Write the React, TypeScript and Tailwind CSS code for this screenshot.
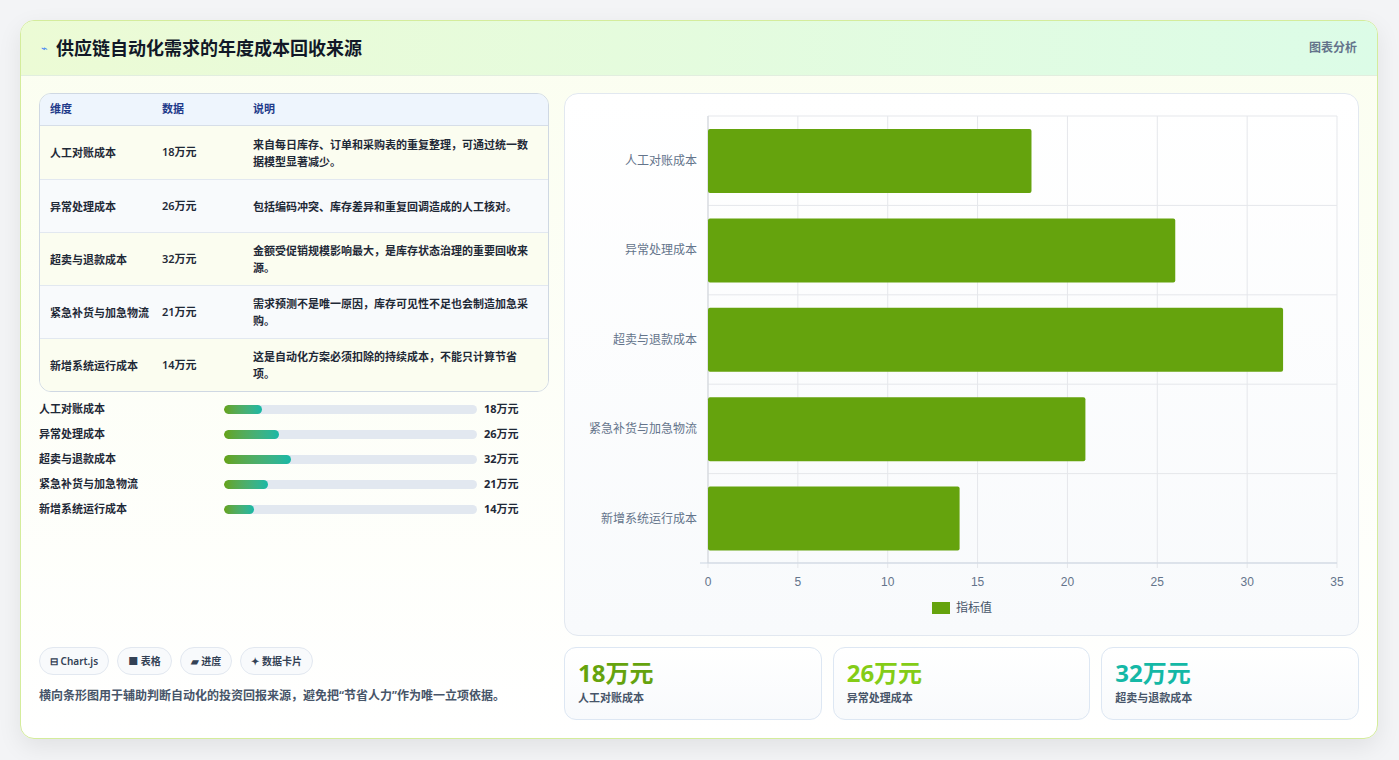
import React from "react";

const rows = [
  { k: "人工对账成本", v: 18, d: "来自每日库存、订单和采购表的重复整理，可通过统一数据模型显著减少。" },
  { k: "异常处理成本", v: 26, d: "包括编码冲突、库存差异和重复回调造成的人工核对。" },
  { k: "超卖与退款成本", v: 32, d: "金额受促销规模影响最大，是库存状态治理的重要回收来源。" },
  { k: "紧急补货与加急物流", v: 21, d: "需求预测不是唯一原因，库存可见性不足也会制造加急采购。" },
  { k: "新增系统运行成本", v: 14, d: "这是自动化方案必须扣除的持续成本，不能只计算节省项。" },
];

function Chart() {
  const x0 = 143, w = 629, top = 22, band = 89.4;
  const sx = (v: number) => x0 + (v / 35) * w;
  return (
    <svg width="795" height="543" className="block">
      {[0, 5, 10, 15, 20, 25, 30, 35].map((t) => (
        <g key={t}>
          <line x1={sx(t)} x2={sx(t)} y1={top} y2={top + 447 + 5} stroke="#e5e7eb" />
          <text x={sx(t)} y={492} fontSize="12" fill="#64748b" textAnchor="middle" fontFamily="Liberation Sans, sans-serif">{t}</text>
        </g>
      ))}
      {[0, 1, 2, 3, 4, 5].map((i) => (
        <line key={i} x1={x0} x2={x0 + w} y1={top + i * band} y2={top + i * band} stroke="#e5e7eb" />
      ))}
      <line x1={x0} x2={x0} y1={top} y2={top + 447} stroke="#d1d5db" />
      <line x1={x0 - 8} x2={x0 + w} y1={top + 447} y2={top + 447} stroke="#cbd5e1" />
      {rows.map((r, i) => (
        <g key={r.k}>
          <rect x={x0} y={top + i * band + 13} width={sx(r.v) - x0} height={64} rx="2" fill="#65a30d" />
          <text x={x0 - 11} y={top + i * band + 49} fontSize="12" fill="#64748b" textAnchor="end" fontFamily="Noto Sans CJK SC, sans-serif">{r.k}</text>
        </g>
      ))}
      <rect x={367} y={508} width={18} height={12} fill="#65a30d" />
      <text x={391} y={518} fontSize="12" fill="#475569" fontFamily="Noto Sans CJK SC, sans-serif">指标值</text>
    </svg>
  );
}

export default function App() {
  return (
    <div className="w-[1399px] h-[760px] bg-[#f3f4f6] pt-[20px] pl-[20px]" style={{ fontFamily: "'Noto Sans', 'Noto Sans CJK SC', sans-serif" }}>
      <div className="w-[1358px] h-[719px] rounded-[14px] border border-[#d4ec9c] bg-gradient-to-b from-[#fbfef0] to-white shadow-[0_8px_24px_rgba(0,0,0,0.08)] overflow-hidden flex flex-col">
        <div className="h-[55px] flex items-center justify-between px-[20px] bg-gradient-to-r from-[#ecfbd5] to-[#dcfce7] border-b border-[#e2eedf]">
          <div className="flex items-center gap-[8px]">
            <span className="text-[#3b82f6] text-[11px]">⌁</span>
            <span className="text-[18px] font-bold text-[#111827]">供应链自动化需求的年度成本回收来源</span>
          </div>
          <span className="text-[12px] font-semibold text-[#64748b]">图表分析</span>
        </div>
        <div className="flex gap-[15px] px-[18px] pt-[17px]">
          <div className="w-[510px] flex flex-col h-[630px]">
            <div className="rounded-[12px] border border-[#cfd8e3] overflow-hidden text-[11px]">
              <div className="flex h-[32px] items-center bg-[#eef5fd] text-[#1e3a8a] font-semibold border-b border-[#d6dee8]">
                <div className="w-[122px] pl-[10px]">维度</div>
                <div className="w-[91px]">数据</div>
                <div>说明</div>
              </div>
              {rows.map((r, i) => (
                <div key={r.k} className={`flex h-[53px] items-center text-[#1f2937] font-semibold ${i > 0 ? "border-t border-[#e2e8f0]" : ""} ${i % 2 === 0 ? "bg-[#fbfdf0]" : "bg-[#f8fafc]"}`}>
                  <div className="w-[122px] pl-[10px] pr-[10px] leading-[17px]">{r.k}</div>
                  <div className="w-[91px]">{r.v}万元</div>
                  <div className="w-[285px] leading-[17px]">{r.d}</div>
                </div>
              ))}
            </div>
            <div className="mt-[8px] flex flex-col gap-[7px]">
              {rows.map((r) => (
                <div key={r.k} className="flex items-center h-[18px] text-[11px] font-semibold text-[#1f2937]">
                  <div className="w-[185px]">{r.k}</div>
                  <div className="w-[253px] h-[9px] rounded-full bg-[#e2e8f0] overflow-hidden">
                    <div className="h-full rounded-full bg-gradient-to-r from-[#65a30d] to-[#14b8a6]" style={{ width: `${(r.v / 120) * 100}%` }} />
                  </div>
                  <div className="ml-[7px] font-bold">{r.v}万元</div>
                </div>
              ))}
            </div>
            <div className="mt-auto pb-[18px]">
              <div className="flex gap-[8px] text-[10px] font-semibold text-[#334155]">
                {["⊟ Chart.js", "■ 表格", "▰ 进度", "✦ 数据卡片"].map((t) => (
                  <span key={t} className="h-[28px] px-[10px] flex items-center rounded-full border border-[#e2e8f0] bg-[#f8fafc]">{t}</span>
                ))}
              </div>
              <div className="mt-[12px] text-[12px] text-[#475569] font-semibold">横向条形图用于辅助判断自动化的投资回报来源，避免把“节省人力”作为唯一立项依据。</div>
            </div>
          </div>
          <div className="w-[795px] flex flex-col gap-[11px]">
            <div className="h-[543px] rounded-[14px] border border-[#e2e8f0] bg-gradient-to-b from-white to-[#f8fafc] overflow-hidden">
              <Chart />
            </div>
            <div className="grid grid-cols-3 gap-[11px]">
              {[
                { v: "18万元", k: "人工对账成本", c: "text-[#65a30d]" },
                { v: "26万元", k: "异常处理成本", c: "text-[#84cc16]" },
                { v: "32万元", k: "超卖与退款成本", c: "text-[#14b8a6]" },
              ].map((s) => (
                <div key={s.k} className="h-[73px] rounded-[12px] border border-[#dde7f3] bg-gradient-to-b from-white to-[#f8fafc] px-[13px] pt-[10px]">
                  <div className={`text-[24px] font-bold leading-[30px] ${s.c}`}>{s.v}</div>
                  <div className="text-[11px] text-[#475569] font-semibold mt-[2px]">{s.k}</div>
                </div>
              ))}
            </div>
          </div>
        </div>
      </div>
    </div>
  );
}
